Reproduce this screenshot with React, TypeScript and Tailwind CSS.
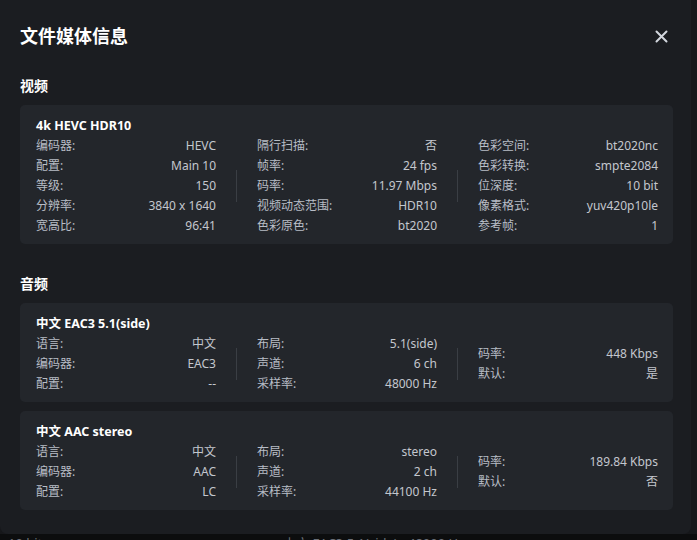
import type { ReactNode } from "react";

type Pair = [string, string];

const FONT = { fontFamily: '"Noto Sans", "Noto Sans CJK SC", sans-serif' };

function Column({ rows }: { rows: Pair[] }) {
  return (
    <div className="w-[180px] shrink-0">
      {rows.map(([k, v]) => (
        <div key={k} className="flex h-5 items-center justify-between leading-5">
          <span className="text-[#b8bdc6]">{k}:</span>
          <span className="text-[#c3c7ce]">{v}</span>
        </div>
      ))}
    </div>
  );
}

function Divider() {
  return <div className="mx-5 h-8 w-px shrink-0 self-center bg-[#3a3e44]" />;
}

function StreamCard({ title, cols }: { title: string; cols: Pair[][] }) {
  return (
    <div className="rounded-[5px] bg-[#23262b] pb-2 pl-4 pt-3">
      <div className="text-[12.5px] font-bold leading-[18px] text-white">{title}</div>
      <div className="mt-px flex text-[12px]">
        <Column rows={cols[0]} />
        <Divider />
        <div className="flex w-[180px] items-center">
          <Column rows={cols[1]} />
        </div>
        <Divider />
        <div className="flex w-[180px] items-center">
          <Column rows={cols[2]} />
        </div>
      </div>
    </div>
  );
}

function Section({ title, children, className = "" }: { title: string; children: ReactNode; className?: string }) {
  return (
    <section className={className}>
      <h2 className="mb-[9px] text-[14px] font-bold leading-5 text-white">{title}</h2>
      <div className="flex flex-col gap-[9px]">{children}</div>
    </section>
  );
}

export default function App() {
  return (
    <div className="flex h-[540px] w-[697px] flex-col overflow-hidden bg-[#16171a]" style={FONT}>
      <div className="h-[534px] w-[691px] shrink-0 rounded-b-lg bg-[#1b1d21] pb-6 pl-5 pr-[18px] pt-[22px]">
        <header className="flex h-7 items-center justify-between">
          <h1 className="text-[18px] font-bold leading-7 text-white">文件媒体信息</h1>
          <button className="mr-[5px] text-[#d3d7de]" aria-label="关闭">
            <svg width="13" height="13" viewBox="0 0 13 13" fill="none" stroke="currentColor" strokeWidth="2" strokeLinecap="round">
              <path d="M1.5 1.5l10 10M11.5 1.5l-10 10" />
            </svg>
          </button>
        </header>

        <Section title="视频" className="mt-[26px]">
          <StreamCard
            title="4k HEVC HDR10"
            cols={[
              [
                ["编码器", "HEVC"],
                ["配置", "Main 10"],
                ["等级", "150"],
                ["分辨率", "3840 x 1640"],
                ["宽高比", "96:41"],
              ],
              [
                ["隔行扫描", "否"],
                ["帧率", "24 fps"],
                ["码率", "11.97 Mbps"],
                ["视频动态范围", "HDR10"],
                ["色彩原色", "bt2020"],
              ],
              [
                ["色彩空间", "bt2020nc"],
                ["色彩转换", "smpte2084"],
                ["位深度", "10 bit"],
                ["像素格式", "yuv420p10le"],
                ["参考帧", "1"],
              ],
            ]}
          />
        </Section>

        <Section title="音频" className="mt-[30px]">
          <StreamCard
            title="中文 EAC3 5.1(side)"
            cols={[
              [
                ["语言", "中文"],
                ["编码器", "EAC3"],
                ["配置", "--"],
              ],
              [
                ["布局", "5.1(side)"],
                ["声道", "6 ch"],
                ["采样率", "48000 Hz"],
              ],
              [
                ["码率", "448 Kbps"],
                ["默认", "是"],
              ],
            ]}
          />
          <StreamCard
            title="中文 AAC stereo"
            cols={[
              [
                ["语言", "中文"],
                ["编码器", "AAC"],
                ["配置", "LC"],
              ],
              [
                ["布局", "stereo"],
                ["声道", "2 ch"],
                ["采样率", "44100 Hz"],
              ],
              [
                ["码率", "189.84 Kbps"],
                ["默认", "否"],
              ],
            ]}
          />
        </Section>
      </div>
      <div className="relative h-[6px] w-full overflow-hidden bg-[#0c0d0e] text-[13px] leading-4 text-[#6a6f77]">
        <span className="absolute left-[8px] top-[1px]">10 bit</span>
        <span className="absolute left-[283px] top-[1px]">中文 EAC3 5.1(side) · 48000 Hz</span>
      </div>
    </div>
  );
}
